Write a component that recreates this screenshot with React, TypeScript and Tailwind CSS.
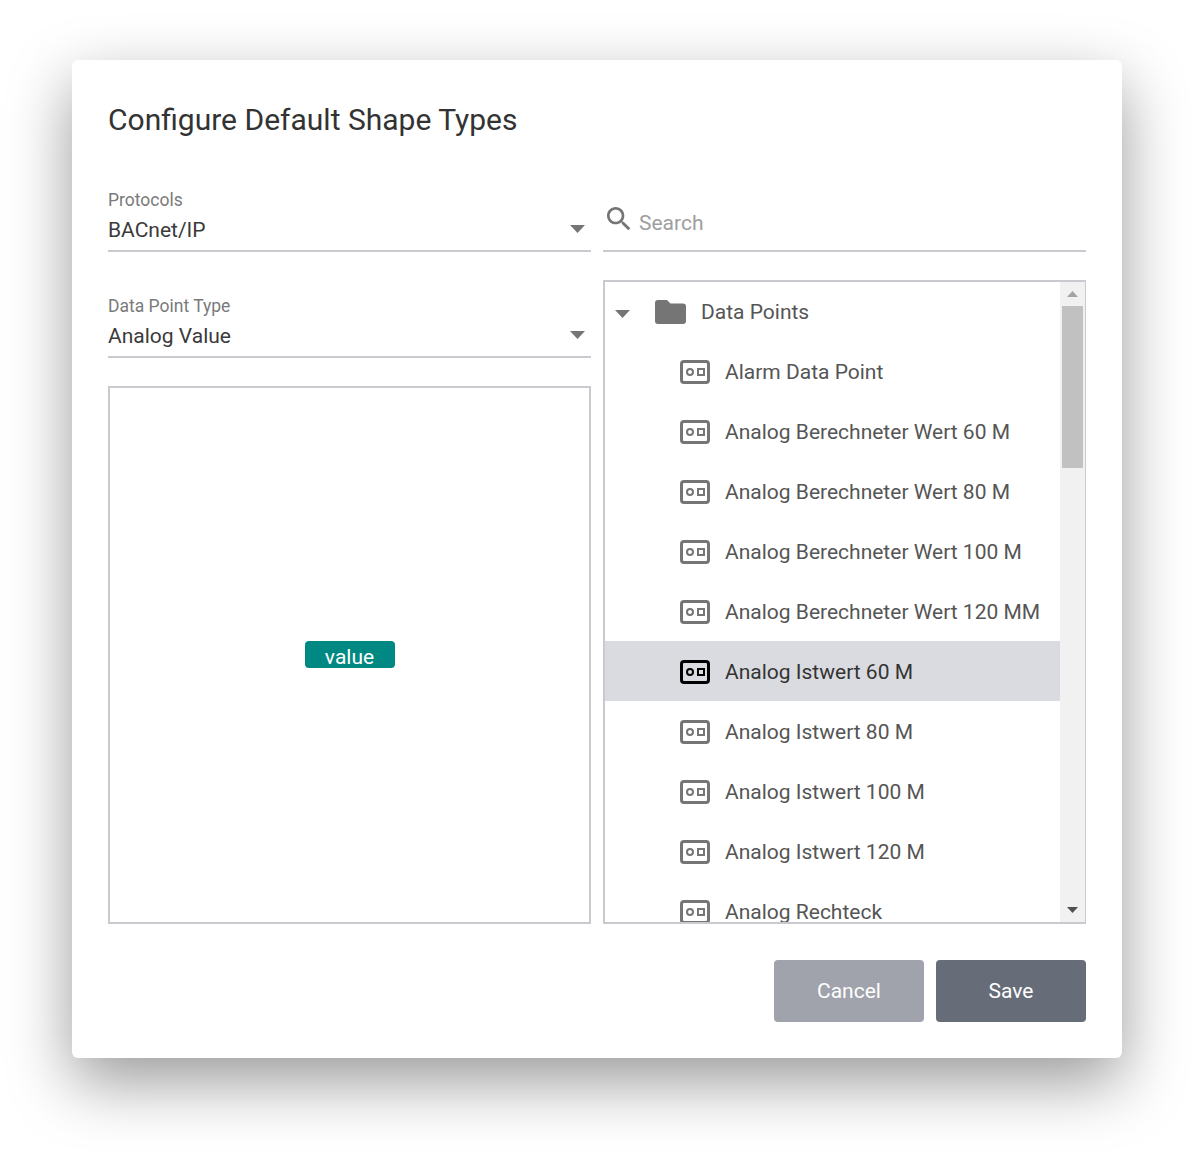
const items = [
  "Alarm Data Point",
  "Analog Berechneter Wert 60 M",
  "Analog Berechneter Wert 80 M",
  "Analog Berechneter Wert 100 M",
  "Analog Berechneter Wert 120 MM",
  "Analog Istwert 60 M",
  "Analog Istwert 80 M",
  "Analog Istwert 100 M",
  "Analog Istwert 120 M",
  "Analog Rechteck",
]

const Caret = ({ className }: { className?: string }) => (
  <svg width="15" height="8" viewBox="0 0 15 8" className={className}>
    <polygon points="0,0 15,0 7.5,8" fill="currentColor" />
  </svg>
)

const ShapeIcon = ({ active }: { active?: boolean }) => (
  <svg width="30" height="24" viewBox="0 0 30 24" fill="none" stroke="currentColor" className={active ? "shrink-0 text-black" : "shrink-0 text-[#757575]"}>
    <rect x="1.5" y="1.5" width="27" height="21" rx="2.5" strokeWidth="3" />
    <circle cx="10" cy="12" r="3" strokeWidth="2" />
    <rect x="18" y="9" width="6" height="6" strokeWidth="2" />
  </svg>
)

const Select = ({ label, value }: { label: string; value: string }) => (
  <div className="border-b-2 border-[#c9c9cf] h-[66px] relative">
    <p className="text-[17.5px] leading-5 text-[#7a7a7a] pt-[4px]">{label}</p>
    <p className="text-[21px] leading-7 text-[#3a3a3a] mt-[6px]">{value}</p>
    <Caret className="absolute right-[6px] top-[39px] text-[#757575]" />
  </div>
)

const App = () => {
  return (
    <div className="w-[1195px] h-[1151px] bg-white pt-[60px] pl-[72px] overflow-hidden font-['Roboto',sans-serif]">
      <div className="w-[1050px] h-[998px] bg-white rounded-[6px] shadow-[0_24px_64px_rgba(0,0,0,0.4)] px-9 pt-[41px]">
        <h1 className="text-[30px] leading-[38px] font-normal text-[#333]">Configure Default Shape Types</h1>

        <div className="flex gap-3 mt-[20px]">
          {/* left column */}
          <div className="w-[483px]">
            <div className="pt-[27px]">
              <Select label="Protocols" value="BACnet/IP" />
            </div>
            <div className="mt-[40px]">
              <Select label="Data Point Type" value="Analog Value" />
            </div>
            <div className="mt-[28px] h-[538px] border-2 border-[#c9c9cf] flex items-center justify-center">
              <div className="w-[90px] h-[27px] bg-[#008982] rounded-[4px] text-white text-[21px] leading-[32px] text-center mt-[-1px]">value</div>
            </div>
          </div>

          {/* right column */}
          <div className="w-[483px]">
            <div className="h-[93px] pt-[27px]">
              <div className="h-[66px] border-b-2 border-[#c9c9cf] flex items-start">
                <svg width="32" height="32" viewBox="0 0 24 24" className="text-[#757575] mt-[17px] shrink-0" fill="currentColor">
                  <path d="M15.5 14h-.79l-.28-.27C15.41 12.59 16 11.11 16 9.5 16 5.91 13.09 3 9.5 3S3 5.91 3 9.5 5.91 16 9.5 16c1.61 0 3.09-.59 4.23-1.57l.27.28v.79l5 4.99L20.49 19l-4.99-5zm-6 0C7.01 14 5 11.99 5 9.5S7.01 5 9.5 5 14 7.01 14 9.5 11.99 14 9.5 14z" />
                </svg>
                <input
                  placeholder="Search"
                  className="ml-[4px] mt-[23px] w-[400px] text-[21px] leading-7 outline-0 placeholder:text-[#9e9e9e]"
                />
              </div>
            </div>

            <div className="mt-[28px] h-[644px] border-2 border-[#c9c9cf] border-r-[1px] flex overflow-hidden">
              <div className="flex-1 -mt-px overflow-hidden">
                <div className="h-[60px] pt-[2px] flex items-center text-[21px] text-[#555]">
                  <Caret className="ml-[10px] mr-[25px] mt-[3px] text-[#757575]" />
                  <svg width="31" height="24" viewBox="0 0 31 24" className="text-[#757575]" fill="currentColor">
                    <path d="M3 0h9l3.5 3.5H28a3 3 0 0 1 3 3V21a3 3 0 0 1-3 3H3a3 3 0 0 1-3-3V3a3 3 0 0 1 3-3z" />
                  </svg>
                  <span className="ml-[15px] mt-[2px]">Data Points</span>
                </div>
                {items.map((item) => {
                  const active = item === "Analog Istwert 60 M"
                  return (
                    <div key={item} className={active ? "h-[60px] pt-[2px] flex items-center pl-[75px] bg-[#dadbe0]" : "h-[60px] pt-[2px] flex items-center pl-[75px]"}>
                      <ShapeIcon active={active} />
                      <span className={active ? "ml-[15px] mt-[2px] text-[21px] text-[#333] whitespace-nowrap" : "ml-[15px] mt-[2px] text-[21px] text-[#555] whitespace-nowrap"}>{item}</span>
                    </div>
                  )
                })}
              </div>

              {/* scrollbar */}
              <div className="w-[25px] shrink-0 bg-[#f1f1f1] flex flex-col items-center relative">
                <svg width="11" height="6" viewBox="0 0 11 6" className="mt-[9px] text-[#a3a3a3]" fill="currentColor">
                  <polygon points="0,6 11,6 5.5,0" />
                </svg>
                <div className="w-[21px] h-[162px] bg-[#c1c1c1] mt-[9px]" />
                <svg width="11" height="6" viewBox="0 0 11 6" className="absolute bottom-[9px] text-[#505050]" fill="currentColor">
                  <polygon points="0,0 11,0 5.5,6" />
                </svg>
              </div>
            </div>
          </div>
        </div>

        <div className="flex justify-end gap-3 mt-9">
          <button className="w-[150px] h-[62px] rounded-[4px] bg-[#a0a3ab] text-white text-[21px] pt-[2px]">Cancel</button>
          <button className="w-[150px] h-[62px] rounded-[4px] bg-[#676c79] text-white text-[21px] pt-[2px]">Save</button>
        </div>
      </div>
    </div>
  )
}

export default App
